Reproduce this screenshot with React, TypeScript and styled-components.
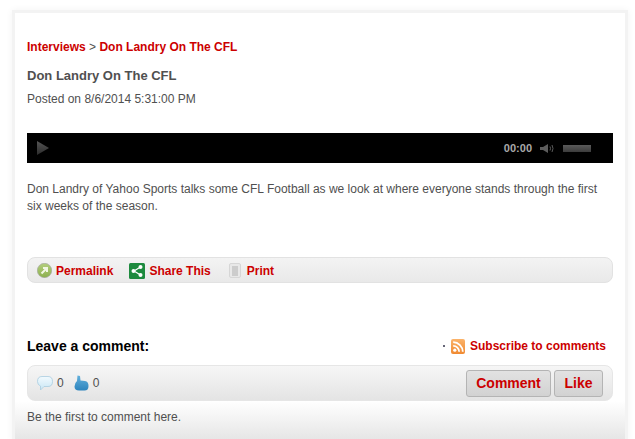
import { createGlobalStyle, styled } from "styled-components";

const GlobalStyle = createGlobalStyle`
  html, body {
    margin: 0;
    padding: 0;
    background: #fff;
    font-family: "Liberation Sans", Arial, sans-serif;
    overflow: hidden;
  }
`;

const Page = styled.div`
  width: 635px;
  height: 439px;
  padding: 13px 10px 0 15px;
  box-sizing: border-box;
  background: #fff;
  overflow: hidden;
`;

const Card = styled.div`
  height: 426px;
  box-sizing: border-box;
  padding: 27px 12px 0 12px;
  background: linear-gradient(to bottom, #fff 0, #fff 388px, #e6e6e6 426px);
  box-shadow: 0 0 0 3px #f3f3f3, 0 0 7px 3px rgba(0, 0, 0, 0.05);
`;

const RedLink = styled.a`
  color: #cc0000;
  font-weight: bold;
  text-decoration: none;
  font-size: 12px;
`;

const Crumbs = styled.div`
  font-size: 12px;
  line-height: 14px;
  color: #505050;
`;

const Title = styled.h1`
  margin: 15px 0 0;
  font-size: 13px;
  line-height: 14px;
  font-weight: bold;
  color: #505050;
`;

const Posted = styled.div`
  margin-top: 9px;
  font-size: 12px;
  line-height: 14px;
  color: #505050;
`;

const Player = styled.div`
  margin-top: 27px;
  height: 30px;
  background: #000;
  display: flex;
  align-items: center;
  padding: 0 22px 0 10px;
`;

const Time = styled.span`
  margin-left: auto;
  color: #a9a9a9;
  font-size: 11px;
  font-weight: bold;
`;

const VolumeBar = styled.div`
  width: 28px;
  height: 7px;
  margin-left: 8px;
  background: linear-gradient(to bottom, #5a5a5a, #3c3c3c);
`;

const Body = styled.p`
  margin: 18px 0 0;
  font-size: 12px;
  line-height: 17px;
  color: #505050;
`;

const LinkBar = styled.div`
  margin-top: 42px;
  height: 26px;
  box-sizing: border-box;
  display: flex;
  align-items: center;
  padding: 1px 9px 0;
  border: 1px solid #e2e2e2;
  border-radius: 8px;
  background: linear-gradient(to bottom, #f3f3f3, #e9e9e9);
`;

const BarItem = styled.div<{ $gap?: number; $after?: number }>`
  display: flex;
  align-items: center;
  gap: ${(p) => p.$gap ?? 4}px;
  margin-right: ${(p) => p.$after ?? 16}px;
`;

const CommentHead = styled.div`
  margin-top: 54px;
  display: flex;
  align-items: center;
  height: 18px;
  padding-right: 7px;
`;

const HeadTitle = styled.h2`
  margin: 0;
  font-size: 14px;
  font-weight: bold;
  color: #000;
`;

const Subscribe = styled.div`
  margin-left: auto;
  display: flex;
  align-items: center;
  gap: 5px;
`;

const Dot = styled.span`
  width: 2px;
  height: 2px;
  margin-right: 1px;
  background: #667;
`;

const CommentBar = styled.div`
  margin-top: 10px;
  height: 36px;
  box-sizing: border-box;
  display: flex;
  align-items: center;
  padding: 0 9px;
  border: 1px solid #e6e6e6;
  border-radius: 8px;
  background: linear-gradient(to bottom, #f6f6f6, #e4e4e4);
  font-size: 12px;
  color: #505050;
`;

const Count = styled.span`
  margin: 0 10px 0 4px;
`;

const Buttons = styled.div`
  margin-left: auto;
  display: flex;
  gap: 3px;
`;

const Button = styled.button<{ $width: number }>`
  height: 27px;
  padding: 0;
  width: ${(p) => p.$width}px;
  box-sizing: border-box;
  border: 1px solid #b4b4b4;
  border-radius: 3px;
  background: linear-gradient(to bottom, #e2e2e2, #d2d2d2);
  color: #cc0000;
  font-family: "Liberation Sans", Arial, sans-serif;
  font-size: 14px;
  font-weight: bold;
`;

const Empty = styled.div`
  margin-top: 9px;
  font-size: 12px;
  line-height: 14px;
  color: #505050;
`;

const PlayIcon = () => (
  <svg width="12" height="14" viewBox="0 0 12 14">
    <defs>
      <linearGradient id="play" x1="0" y1="0" x2="0" y2="1">
        <stop offset="0" stopColor="#555" />
        <stop offset="1" stopColor="#2c2c2c" />
      </linearGradient>
    </defs>
    <path d="M0 0L12 7L0 14Z" fill="url(#play)" />
  </svg>
);

const VolumeIcon = () => (
  <svg width="15" height="11" viewBox="0 0 15 11" style={{ marginLeft: 8 }}>
    <path d="M0 4H3L8 1V10L3 7H0Z" fill="#5c5c5c" />
    <path d="M10 3.5Q11 5.5 10 7.5M12 2Q14 5.5 12 9" fill="none" stroke="#5c5c5c" strokeWidth="1" />
  </svg>
);

const PermalinkIcon = () => (
  <svg width="15" height="15" viewBox="0 0 15 15">
    <defs>
      <linearGradient id="perm" x1="0" y1="0" x2="0" y2="1">
        <stop offset="0" stopColor="#b4cf7e" />
        <stop offset="1" stopColor="#8cb04e" />
      </linearGradient>
    </defs>
    <circle cx="7.5" cy="7.5" r="7.2" fill="url(#perm)" stroke="#a2a2a2" strokeWidth="0.6" />
    <path d="M4.5 10.5L9.5 5.5M6 5H10V9" fill="none" stroke="#f2f7e4" strokeWidth="2" />
  </svg>
);

const ShareIcon = () => (
  <svg width="16" height="16" viewBox="0 0 16 16">
    <rect width="16" height="16" rx="1.5" fill="#1d8a3e" />
    <path d="M11.5 4L5 8L11.5 12" fill="none" stroke="#fff" strokeWidth="1.2" />
    <circle cx="11.5" cy="4" r="2" fill="#fff" />
    <circle cx="4.5" cy="8" r="2" fill="#fff" />
    <circle cx="11.5" cy="12" r="2" fill="#fff" />
  </svg>
);

const PrintIcon = () => (
  <svg width="12" height="15" viewBox="0 0 12 15">
    <rect x="0.5" y="0.5" width="11" height="14" rx="1.5" fill="#e8e8e8" stroke="#d6d6d6" />
    <path d="M3 4H9M3 6H9M3 8H9M3 10H9M3 12H9" stroke="#b0b0b0" strokeWidth="1" />
  </svg>
);

const RssIcon = () => (
  <svg width="14" height="15" viewBox="0 0 14 15">
    <defs>
      <linearGradient id="rss" x1="0" y1="0" x2="0" y2="1">
        <stop offset="0" stopColor="#fbb36a" />
        <stop offset="1" stopColor="#f08a32" />
      </linearGradient>
    </defs>
    <rect width="14" height="15" rx="2" fill="url(#rss)" />
    <circle cx="3.8" cy="11.2" r="1.6" fill="#fff" />
    <path d="M2.2 6.8A6 6 0 0 1 8.2 12.8M2.2 3.2A9.6 9.6 0 0 1 11.8 12.8" fill="none" stroke="#fff" strokeWidth="1.8" />
  </svg>
);

const BubbleIcon = () => (
  <svg width="16" height="15" viewBox="0 0 16 15">
    <defs>
      <linearGradient id="bubble" x1="0" y1="0" x2="0" y2="1">
        <stop offset="0" stopColor="#f2fafe" />
        <stop offset="1" stopColor="#c8e6f5" />
      </linearGradient>
    </defs>
    <path
      d="M5 0.5H11Q15.5 0.5 15.5 5.5Q15.5 10.5 11 10.5H7L3.5 14V10Q0.5 9 0.5 5.5Q0.5 0.5 5 0.5Z"
      fill="url(#bubble)"
      stroke="#a9cde0"
      strokeWidth="0.8"
    />
  </svg>
);

const ThumbIcon = () => (
  <svg width="15" height="16" viewBox="0 0 15 16">
    <defs>
      <linearGradient id="thumb" x1="0" y1="0" x2="0" y2="1">
        <stop offset="0" stopColor="#62b0dc" />
        <stop offset="1" stopColor="#2d84bd" />
      </linearGradient>
    </defs>
    <path
      d="M3.5 0.5L6 1L6.5 5.5L11 6Q14.5 6.5 14.5 11Q14.5 15.5 10.5 15.5H5Q0.5 15.5 0.5 11.5Q0.5 8 3 6Z"
      fill="url(#thumb)"
    />
  </svg>
);

const App = () => {
  return (
    <>
      <GlobalStyle />
      <Page>
        <Card>
          <Crumbs>
            <RedLink>Interviews</RedLink> &gt; <RedLink>Don Landry On The CFL</RedLink>
          </Crumbs>
          <Title>Don Landry On The CFL</Title>
          <Posted>Posted on 8/6/2014 5:31:00 PM</Posted>
          <Player>
            <PlayIcon />
            <Time>00:00</Time>
            <VolumeIcon />
            <VolumeBar />
          </Player>
          <Body>
            Don Landry of Yahoo Sports talks some CFL Football as we look at where everyone stands through the first
            <br />
            six weeks of the season.
          </Body>
          <LinkBar>
            <BarItem>
              <PermalinkIcon />
              <RedLink>Permalink</RedLink>
            </BarItem>
            <BarItem $after={18}>
              <ShareIcon />
              <RedLink>Share This</RedLink>
            </BarItem>
            <BarItem $gap={6}>
              <PrintIcon />
              <RedLink>Print</RedLink>
            </BarItem>
          </LinkBar>
          <CommentHead>
            <HeadTitle>Leave a comment:</HeadTitle>
            <Subscribe>
              <Dot />
              <RssIcon />
              <RedLink>Subscribe to comments</RedLink>
            </Subscribe>
          </CommentHead>
          <CommentBar>
            <BubbleIcon />
            <Count>0</Count>
            <ThumbIcon />
            <Count>0</Count>
            <Buttons>
              <Button $width={85}>Comment</Button>
              <Button $width={49}>Like</Button>
            </Buttons>
          </CommentBar>
          <Empty>Be the first to comment here.</Empty>
        </Card>
      </Page>
    </>
  );
};

export default App;
